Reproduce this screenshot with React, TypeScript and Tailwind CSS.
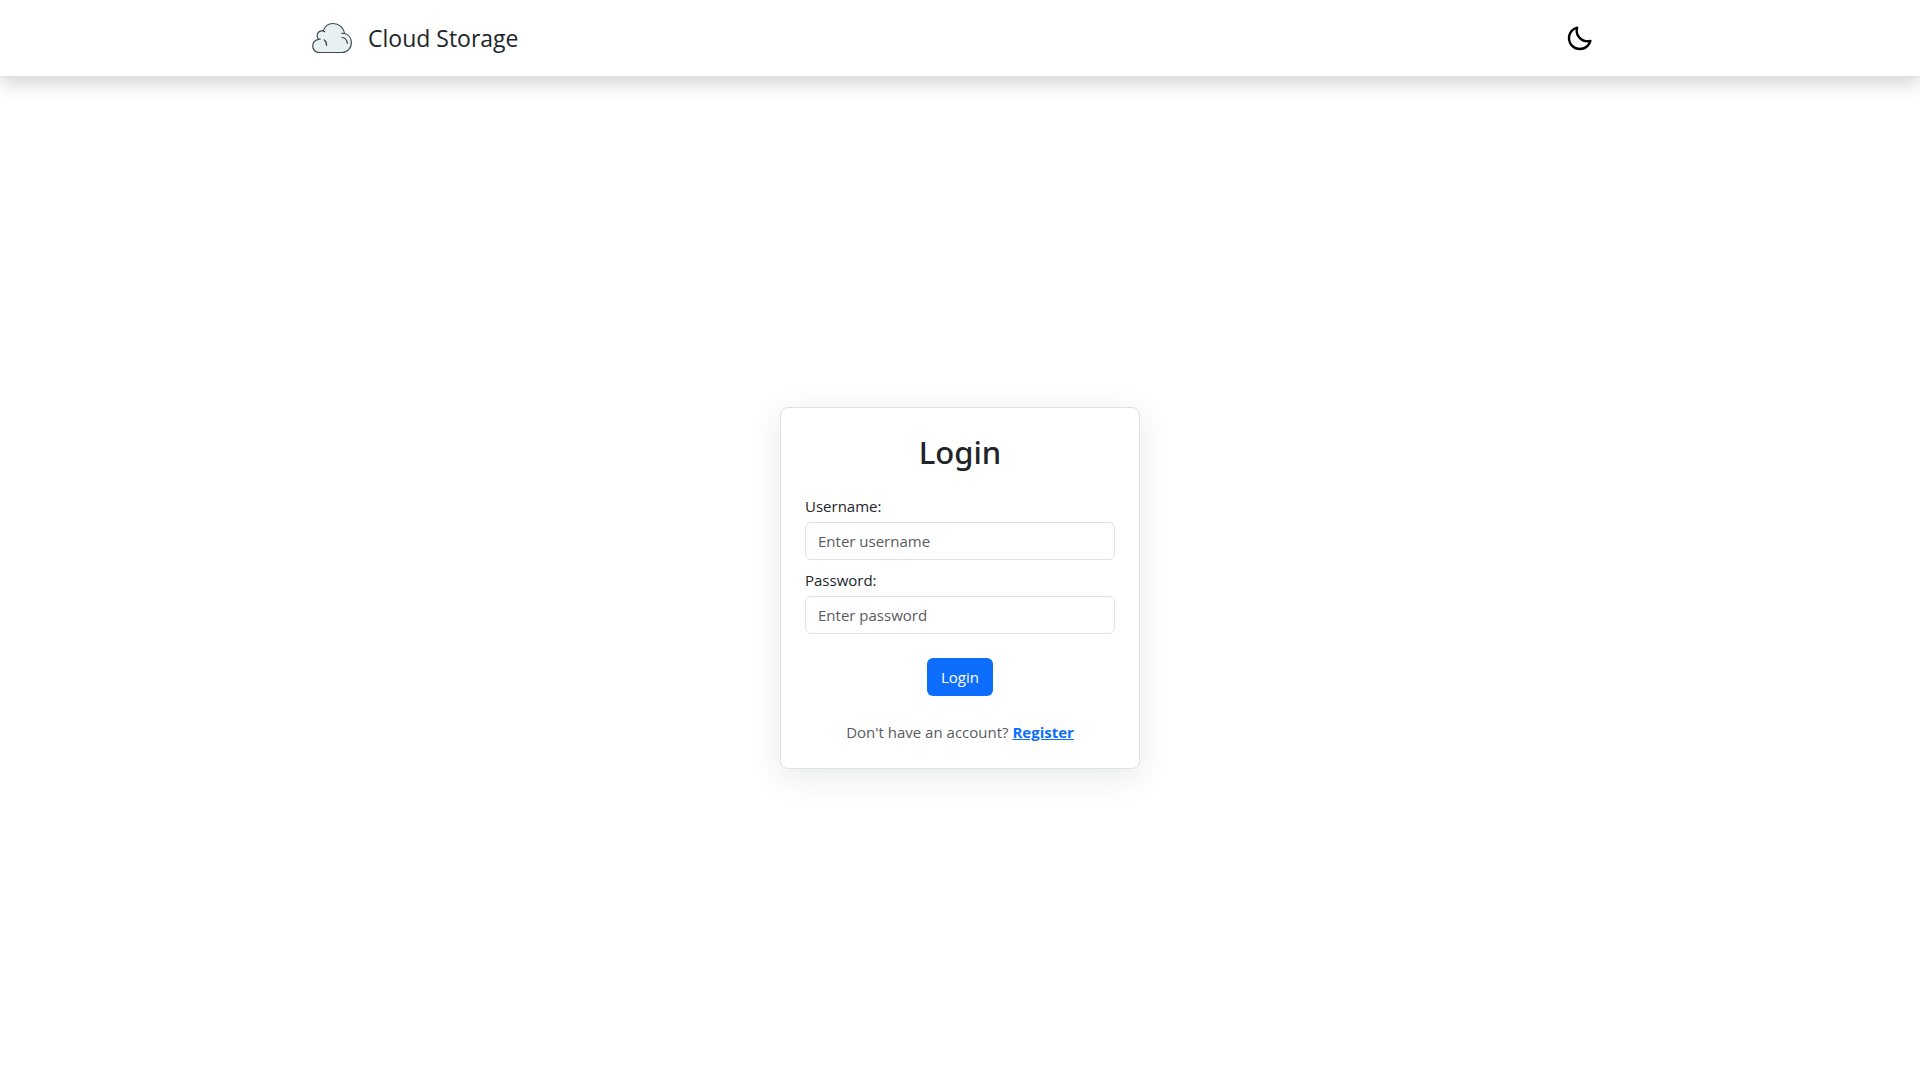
import { BiMoon } from "react-icons/bi";

function CloudLogo() {
  return (
    <svg className="h-10 w-10" viewBox="0 0 40 40" fill="none" aria-hidden="true">
      <path
        d="M7.5 34.5C3.5 34.5 .7 31.8 .7 28.2C.7 24.700 3.100 21.900 6.500 21.300C4 18.500 4.900 13.600 9.200 12.800C9.900 12.600 10.700 12.700 11.300 12.900C12.600 8.400 16.400 5.500 21 5.500C27.200 5.500 31.900 9.900 32.600 15.500C36.700 16.500 39.400 20.300 39.400 24.500C39.400 30 35.500 34.500 30 34.500Z"
        fill="#e8f1f2"
        stroke="#3f484b"
        strokeWidth="1.200"
        strokeLinejoin="round"
      />
      <path
        d="M11.300 12.900L12.700 13.800M6.500 21.300L8.200 21.100M32.600 15.500L29.800 15.300M12.100 21.800C13.800 23 14.700 25 14.600 27.500M30 19.500C33 19.700 35 22 35.300 25.500"
        stroke="#3f484b"
        strokeWidth="1.200"
        strokeLinecap="round"
      />
    </svg>
  );
}

function Header() {
  return (
    <header className="border-b border-[#dee2e6] bg-white shadow-[0_8px_16px_rgba(0,0,0,0.15)]">
      <div className="mx-auto flex h-19 w-full max-w-[1320px] items-center justify-between px-3">
        <a href="#" className="flex items-center gap-4 text-[23px] leading-9 text-[#212529]">
          <CloudLogo />
          <span>Cloud Storage</span>
        </a>
        <button type="button" aria-label="Switch to dark theme" className="mr-3.5 text-black">
          <BiMoon size={29} />
        </button>
      </div>
    </header>
  );
}

type FieldProps = { id: string; label: string; type: string; placeholder: string };

function Field({ id, label, type, placeholder }: FieldProps) {
  return (
    <div className="flex flex-col gap-1">
      <label htmlFor={id} className="self-start">
        {label}
      </label>
      <input
        id={id}
        type={type}
        placeholder={placeholder}
        className="h-[38px] w-full rounded-md border border-[#dee2e6] bg-white px-3 placeholder:text-[#595c5f]"
      />
    </div>
  );
}

export default function App() {
  return (
    <div className="flex min-h-screen flex-col bg-white font-['Open_Sans','Noto_Sans',sans-serif] text-[15px] leading-6 text-[#212529]">
      <Header />
      <main className="flex flex-1 items-center justify-center px-4 pt-[19px]">
        <form className="w-full max-w-[360px] rounded-lg border border-[#dee2e6] bg-white p-6 shadow-[0_8px_32px_rgba(33,37,41,0.1)]">
          <h1 className="mb-[22px] text-center font-['Noto_Sans',sans-serif] text-[31px] leading-10 font-medium">
            Login
          </h1>
          <div className="flex flex-col gap-2">
            <Field id="username" label="Username:" type="text" placeholder="Enter username" />
            <Field id="password" label="Password:" type="password" placeholder="Enter password" />
          </div>
          <div className="my-6 flex justify-center">
            <button type="submit" className="h-[38px] rounded-md bg-[#0d6efd] px-3.5 text-white">
              Login
            </button>
          </div>
          <p className="text-center text-[#595c5f]">
            Don't have an account?{" "}
            <a href="#" className="font-bold text-[#0d6efd] underline">
              Register
            </a>
          </p>
        </form>
      </main>
    </div>
  );
}
